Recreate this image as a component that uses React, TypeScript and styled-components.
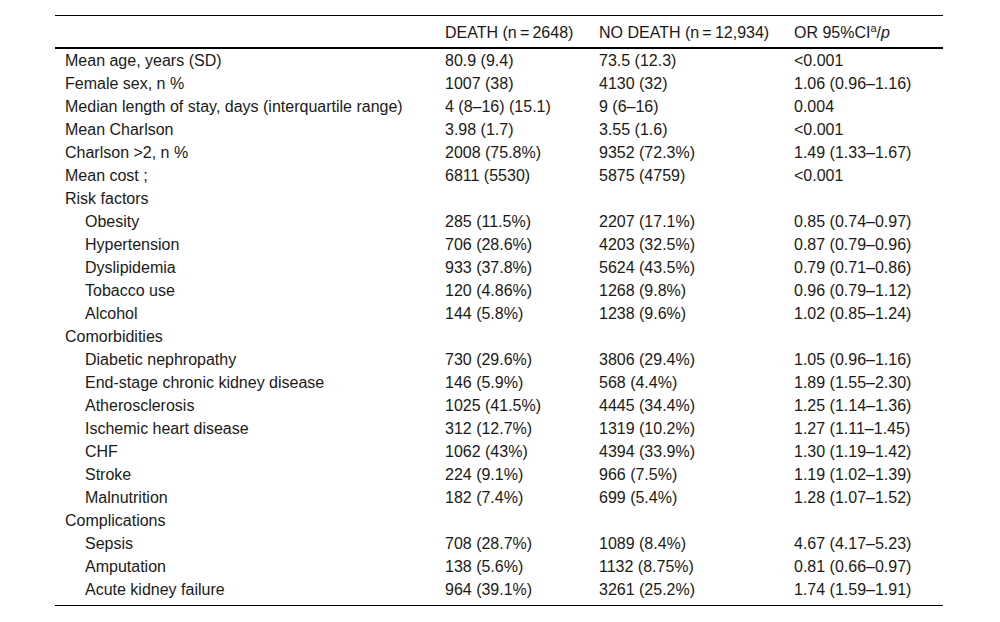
import styled, { createGlobalStyle } from "styled-components";

const GlobalStyle = createGlobalStyle`
  html, body {
    margin: 0;
    padding: 0;
    background: #ffffff;
  }
  body {
    font-family: "Liberation Sans", Arial, sans-serif;
    color: #1a1a1a;
  }
`;

type Row = {
  label: string;
  death?: string;
  noDeath?: string;
  or?: string;
  sub?: boolean;
};

const rows: Row[] = [
  { label: "Mean age, years (SD)", death: "80.9 (9.4)", noDeath: "73.5 (12.3)", or: "<0.001" },
  { label: "Female sex, n %", death: "1007 (38)", noDeath: "4130 (32)", or: "1.06 (0.96–1.16)" },
  { label: "Median length of stay, days (interquartile range)", death: "4 (8–16) (15.1)", noDeath: "9 (6–16)", or: "0.004" },
  { label: "Mean Charlson", death: "3.98 (1.7)", noDeath: "3.55 (1.6)", or: "<0.001" },
  { label: "Charlson >2, n %", death: "2008 (75.8%)", noDeath: "9352 (72.3%)", or: "1.49 (1.33–1.67)" },
  { label: "Mean cost ;", death: "6811 (5530)", noDeath: "5875 (4759)", or: "<0.001" },
  { label: "Risk factors" },
  { label: "Obesity", sub: true, death: "285 (11.5%)", noDeath: "2207 (17.1%)", or: "0.85 (0.74–0.97)" },
  { label: "Hypertension", sub: true, death: "706 (28.6%)", noDeath: "4203 (32.5%)", or: "0.87 (0.79–0.96)" },
  { label: "Dyslipidemia", sub: true, death: "933 (37.8%)", noDeath: "5624 (43.5%)", or: "0.79 (0.71–0.86)" },
  { label: "Tobacco use", sub: true, death: "120 (4.86%)", noDeath: "1268 (9.8%)", or: "0.96 (0.79–1.12)" },
  { label: "Alcohol", sub: true, death: "144 (5.8%)", noDeath: "1238 (9.6%)", or: "1.02 (0.85–1.24)" },
  { label: "Comorbidities" },
  { label: "Diabetic nephropathy", sub: true, death: "730 (29.6%)", noDeath: "3806 (29.4%)", or: "1.05 (0.96–1.16)" },
  { label: "End-stage chronic kidney disease", sub: true, death: "146 (5.9%)", noDeath: "568 (4.4%)", or: "1.89 (1.55–2.30)" },
  { label: "Atherosclerosis", sub: true, death: "1025 (41.5%)", noDeath: "4445 (34.4%)", or: "1.25 (1.14–1.36)" },
  { label: "Ischemic heart disease", sub: true, death: "312 (12.7%)", noDeath: "1319 (10.2%)", or: "1.27 (1.11–1.45)" },
  { label: "CHF", sub: true, death: "1062 (43%)", noDeath: "4394 (33.9%)", or: "1.30 (1.19–1.42)" },
  { label: "Stroke", sub: true, death: "224 (9.1%)", noDeath: "966 (7.5%)", or: "1.19 (1.02–1.39)" },
  { label: "Malnutrition", sub: true, death: "182 (7.4%)", noDeath: "699 (5.4%)", or: "1.28 (1.07–1.52)" },
  { label: "Complications" },
  { label: "Sepsis", sub: true, death: "708 (28.7%)", noDeath: "1089 (8.4%)", or: "4.67 (4.17–5.23)" },
  { label: "Amputation", sub: true, death: "138 (5.6%)", noDeath: "1132 (8.75%)", or: "0.81 (0.66–0.97)" },
  { label: "Acute kidney failure", sub: true, death: "964 (39.1%)", noDeath: "3261 (25.2%)", or: "1.74 (1.59–1.91)" },
];

export default function App() {
  return (
    <>
      <GlobalStyle />
      <Page>
        <Table>
          <colgroup>
            <col style={{ width: 380 }} />
            <col style={{ width: 154 }} />
            <col style={{ width: 195 }} />
            <col style={{ width: 159 }} />
          </colgroup>
          <thead>
            <HeadRow>
              <HeadCell />
              <HeadCell>DEATH (n{"\u2009"}={"\u2009"}2648)</HeadCell>
              <HeadCell>NO DEATH (n{"\u2009"}={"\u2009"}12,934)</HeadCell>
              <HeadCell>
                OR 95%CI<Sup>a</Sup>/<i>p</i>
              </HeadCell>
            </HeadRow>
          </thead>
          <tbody>
            {rows.map((r, i) => (
              <BodyRow key={i} $last={i === rows.length - 1}>
                <LabelCell $sub={r.sub} $last={i === rows.length - 1}>
                  {r.label}
                </LabelCell>
                <Cell $last={i === rows.length - 1}>{r.death}</Cell>
                <Cell $last={i === rows.length - 1}>{r.noDeath}</Cell>
                <Cell $last={i === rows.length - 1}>{r.or}</Cell>
              </BodyRow>
            ))}
          </tbody>
        </Table>
      </Page>
    </>
  );
}

const Page = styled.div`
  padding: 15px 0 0 55px;
`;

const Table = styled.table`
  width: 888px;
  table-layout: fixed;
  border-collapse: collapse;
  font-size: 16px;
  line-height: 17px;
  border-top: 1px solid #000;
  border-bottom: 1px solid #000;
`;

const HeadRow = styled.tr`
  border-bottom: 2px solid #000;
`;

const HeadCell = styled.th`
  font-weight: 400;
  text-align: left;
  padding: 8px 8px 6px 10px;
  height: 17px;
  white-space: nowrap;
`;

const Sup = styled.sup`
  font-size: 11px;
  line-height: 0;
  vertical-align: 6px;
`;

const BodyRow = styled.tr<{ $last?: boolean }>`
  height: 23px;
`;

const Cell = styled.td<{ $last?: boolean }>`
  padding: 3px 8px ${(p) => (p.$last ? "7px" : "3px")} 10px;
  text-align: left;
  white-space: nowrap;
`;

const LabelCell = styled(Cell)<{ $sub?: boolean }>`
  padding-left: ${(p) => (p.$sub ? "30px" : "10px")};
`;
